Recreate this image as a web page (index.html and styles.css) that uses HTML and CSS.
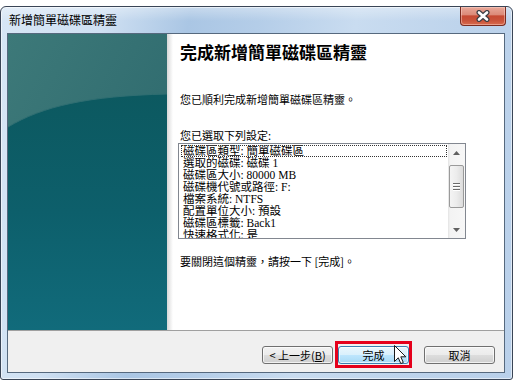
FILE: index.html
```html
<!DOCTYPE html>
<html lang="zh-Hant">
<head>
<meta charset="utf-8">
<title>新增簡單磁碟區精靈</title>
<link rel="stylesheet" href="styles.css">
</head>
<body>
<div class="window">
  <div class="titlebar">
    <span class="title">新增簡單磁碟區精靈</span>
    <div class="close">
      <svg width="16" height="12" viewBox="0 0 16 12">
        <path d="M4 2.5 L12 9.5 M12 2.5 L4 9.5" stroke="#3d3f45" stroke-width="5" stroke-linecap="round"/>
        <path d="M4 2.5 L12 9.5 M12 2.5 L4 9.5" stroke="#ffffff" stroke-width="2.6" stroke-linecap="round"/>
      </svg>
    </div>
  </div>
  <div class="client">
    <div class="main">
      <div class="side">
        <svg width="159" height="296" viewBox="0 0 159 296">
          <defs>
            <linearGradient id="gTop" x1="0" y1="0" x2="1" y2="1">
              <stop offset="0" stop-color="#3d7979"/>
              <stop offset="1" stop-color="#2a666b"/>
            </linearGradient>
            <linearGradient id="gBot" x1="0" y1="0" x2="0" y2="1">
              <stop offset="0" stop-color="#0c5960"/>
              <stop offset="0.5" stop-color="#0d5f6b"/>
              <stop offset="1" stop-color="#116b7b"/>
            </linearGradient>
          </defs>
          <rect width="159" height="296" fill="url(#gTop)"/>
          <path d="M0 93 C35 72 80 62 159 60 L159 296 L0 296 Z" fill="url(#gBot)"/>
          <path d="M0 93 C35 72 80 62 159 60" fill="none" stroke="#2f6e72" stroke-width="1"/>
        </svg>
      </div>
      <div class="content">
        <h1 class="heading">完成新增簡單磁碟區精靈</h1>
        <p class="text t1">您已順利完成新增簡單磁碟區精靈。</p>
        <p class="text t2">您已選取下列設定:</p>
        <div class="listbox">
          <div class="items">
            <div class="item focus">磁碟區類型: 簡單磁碟區</div>
            <div class="item">選取的磁碟: 磁碟 1</div>
            <div class="item">磁碟區大小: 80000 MB</div>
            <div class="item">磁碟機代號或路徑: F:</div>
            <div class="item">檔案系統: NTFS</div>
            <div class="item">配置單位大小: 預設</div>
            <div class="item">磁碟區標籤: Back1</div>
            <div class="item">快速格式化: 是</div>
          </div>
          <div class="scrollbar">
            <div class="arrow up"><svg width="7" height="4" viewBox="0 0 7 4"><path d="M0 4 L3.5 0 L7 4 Z" fill="#606060"/></svg></div>
            <div class="track">
              <div class="thumb">
                <span class="grip"></span><span class="grip"></span><span class="grip"></span>
              </div>
            </div>
            <div class="arrow down"><svg width="7" height="4" viewBox="0 0 7 4"><path d="M0 0 L7 0 L3.5 4 Z" fill="#606060"/></svg></div>
          </div>
        </div>
        <p class="text t3">要關閉這個精靈，請按一下 [完成]。</p>
      </div>
    </div>
    <div class="footer">
      <button class="btn">&lt; 上一步(<u>B</u>)</button>
      <div class="finish-wrap">
        <button class="btn hover">完成</button>
        <span class="mark"></span>
        <svg class="cursor" width="13" height="20" viewBox="0 0 13 20">
          <path d="M0.5 0.5 L0.5 16.5 L4.3 12.8 L6.8 18.6 L9.3 17.5 L6.8 11.8 L11.8 11.8 Z" fill="#ffffff" stroke="#1a1a1a" stroke-width="1" stroke-linejoin="round"/>
        </svg>
      </div>
      <button class="btn cancel">取消</button>
    </div>
  </div>
</div>
</body>
</html>
```

FILE: styles.css
```css
* { box-sizing: border-box; }

html, body {
  margin: 0;
  padding: 0;
  background: #ffffff;
}

body {
  font-family: "Noto Sans CJK TC", "Liberation Sans", sans-serif;
  color: #000;
}

.window {
  margin-top: 6px;
  width: 513px;
  height: 374px;
  border: 1px solid #3a4556;
  border-radius: 6px 6px 3px 3px;
  padding: 0 7px 6px 6px;
  background:
    linear-gradient(180deg, rgba(255,255,255,0.35) 0, rgba(255,255,255,0) 14px),
    linear-gradient(100deg, #d7e6f5 0%, #cfe0f2 18%, #aac6e4 33%, #b4cde8 45%, #c9dcf0 62%, #bed4ec 80%, #b9d0ea 100%);
  box-shadow: inset 0 0 0 1px rgba(255,255,255,0.55);
}

.titlebar {
  height: 26px;
  display: flex;
  align-items: center;
  padding-left: 2px;
}

.title {
  font-size: 12px;
  line-height: 14px;
  color: #000;
  letter-spacing: 0;
}

.close {
  margin-left: auto;
  margin-right: -1px;
  align-self: flex-start;
  width: 46px;
  height: 19px;
  border: 1px solid #7a2b1f;
  border-top: none;
  border-radius: 0 0 4px 4px;
  background: linear-gradient(180deg, #e9a899 0%, #dc8b79 42%, #c64a33 50%, #c9533a 75%, #d86b4d 100%);
  box-shadow: inset 0 0 0 1px rgba(255,220,210,0.45);
  display: flex;
  align-items: center;
  justify-content: center;
}

.client {
  border: 1px solid #56697e;
  height: 340px;
  display: flex;
  flex-direction: column;
  background: #f0f0f0;
}

.main {
  height: 296px;
  display: flex;
}

.side {
  width: 159px;
  height: 296px;
  flex: none;
}

.side svg { display: block; }

.content {
  flex: 1;
  background: linear-gradient(90deg, #d6d6d6 0, #ececec 3px, #ffffff 6px);
  padding: 8px 0 0 13px;
}

.heading {
  margin: 0;
  font-size: 17px;
  line-height: 20px;
  font-weight: bold;
  color: #000;
}

.text {
  margin: 0;
  font-size: 11px;
  line-height: 13px;
}

.t1 { margin-top: 31px; }
.t2 { margin-top: 23px; }
.t3 { margin-top: 16px; }

.listbox {
  margin-top: 1px;
  margin-left: -2px;
  width: 288px;
  height: 96px;
  border: 1px solid #828790;
  background: #fff;
  display: flex;
  overflow: hidden;
}

.items {
  flex: 1;
  padding: 1px 1px 0 2px;
  overflow: hidden;
}

.item {
  font-family: "Liberation Serif", "Noto Sans CJK TC", serif;
  font-size: 11.5px;
  line-height: 12px;
  height: 12px;
  padding-left: 2px;
  white-space: nowrap;
  color: #000;
}

.item.focus {
  outline: 1px dotted #333;
  outline-offset: -1px;
}

.scrollbar {
  width: 17px;
  flex: none;
  display: flex;
  flex-direction: column;
  background: linear-gradient(90deg, #e3e3e3 0, #f3f3f3 2px, #f7f7f7 100%);
}

.arrow {
  height: 17px;
  display: flex;
  align-items: center;
  justify-content: center;
}

.arrow svg { display: block; }

.track {
  flex: 1;
  padding: 4px 1px 0 1px;
}

.thumb {
  height: 43px;
  border: 1px solid #9a9a9a;
  border-radius: 2px;
  background: linear-gradient(90deg, #f4f4f4 0, #ececec 50%, #dcdcdc 100%);
  display: flex;
  flex-direction: column;
  align-items: center;
  justify-content: center;
  gap: 2px;
}

.grip {
  display: block;
  width: 7px;
  height: 1px;
  background: #6a6a6a;
  box-shadow: 0 1px 0 #fff;
}

.footer {
  flex: 1;
  border-top: 1px solid #a0a0a0;
  display: flex;
  justify-content: flex-end;
  align-items: flex-start;
  padding: 15px 9px 0 0;
}

.btn {
  width: 71px;
  height: 18px;
  padding: 0;
  margin: 0;
  border: 1px solid #707070;
  border-radius: 3px;
  background: linear-gradient(180deg, #f2f2f2 0, #ebebeb 50%, #dddddd 51%, #cfcfcf 100%);
  box-shadow: inset 0 0 0 1px rgba(255,255,255,0.7);
  font-family: "Noto Sans CJK TC", "Liberation Sans", sans-serif;
  font-size: 11px;
  line-height: 14px;
  color: #000;
  display: flex;
  align-items: center;
  justify-content: center;
}

.btn u { text-decoration: underline; }

.btn.hover {
  border-color: #3c7fb1;
  background: linear-gradient(180deg, #eaf6fd 0, #d9f0fc 50%, #bee6fd 51%, #a7d9f5 100%);
}

.finish-wrap {
  position: relative;
  margin-left: 5px;
  margin-right: 15px;
}

.mark {
  position: absolute;
  left: -3px;
  right: -3px;
  top: -5px;
  bottom: -4px;
  border: 3px solid #e5001b;
}

.cursor {
  position: absolute;
  left: 56px;
  top: -1px;
  display: block;
}
```
